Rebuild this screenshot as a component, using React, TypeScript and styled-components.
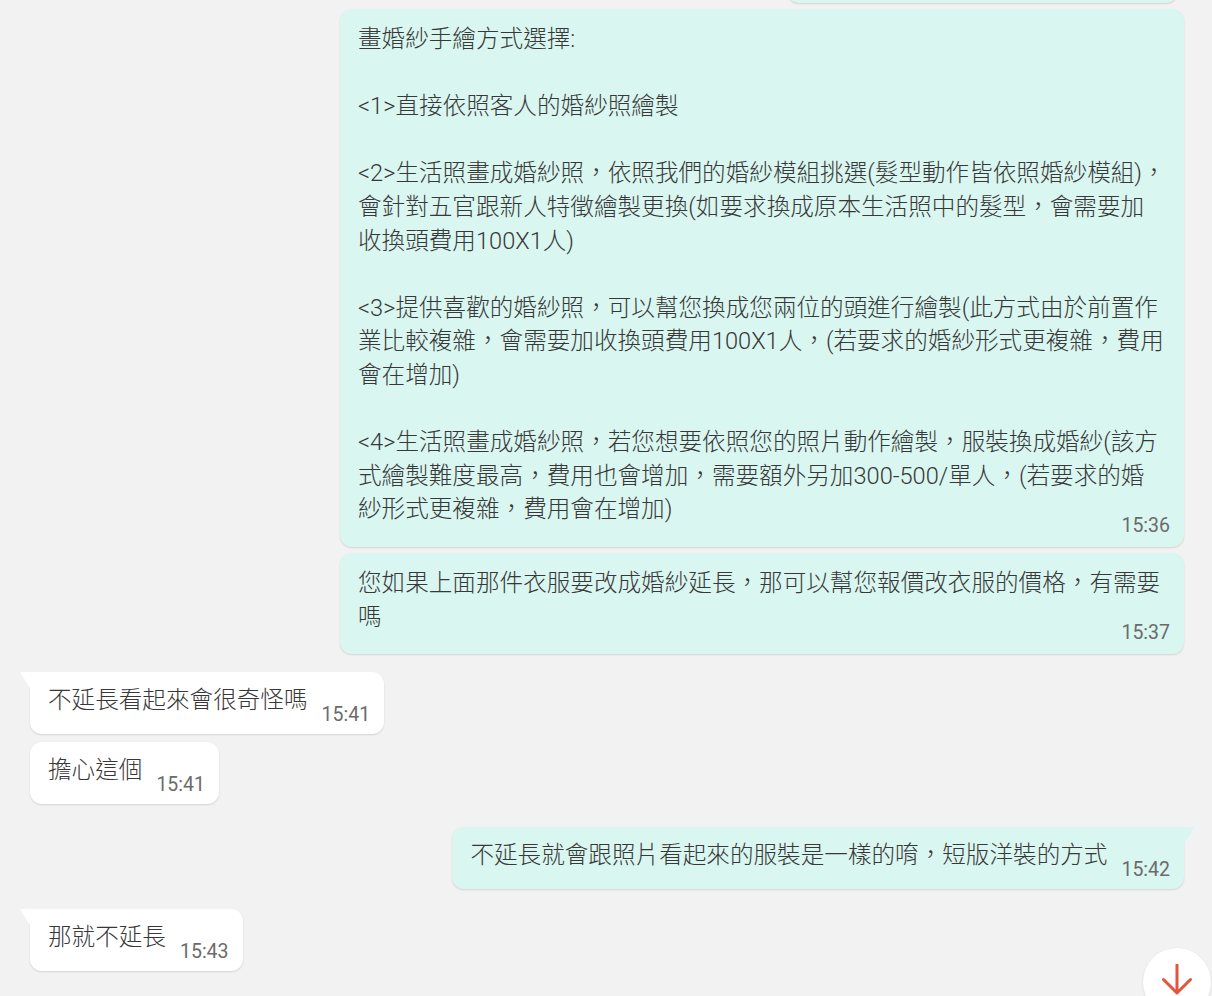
import React from "react";
import styled, { createGlobalStyle, css } from "styled-components";

const GlobalStyle = createGlobalStyle`
  html, body {
    margin: 0;
    padding: 0;
    background: #f2f2f2;
    overflow: hidden;
  }
  body {
    font-family: Roboto, "Noto Sans CJK TC", sans-serif;
  }
`;

const Chat = styled.div`
  display: flex;
  flex-direction: column;
  height: 996px;
  box-sizing: border-box;
  padding: 0 28px 0 30px;
`;

const Row = styled.div<{ $out?: boolean; $gap: number }>`
  display: flex;
  justify-content: ${(p) => (p.$out ? "flex-end" : "flex-start")};
  margin-top: ${(p) => p.$gap}px;
`;

const Bubble = styled.div<{ $out?: boolean; $tail?: boolean; $wide?: boolean }>`
  position: relative;
  box-sizing: border-box;
  background: ${(p) => (p.$out ? "#d9f6f0" : "#ffffff")};
  color: #383838;
  border-radius: 12px;
  box-shadow: 0 1px 2px rgba(0, 0, 0, 0.13);
  display: flex;
  ${(p) =>
    p.$wide
      ? css`
          flex-direction: column;
          width: 844px;
          padding: 14px 14px 10px 18px;
        `
      : css`
          align-items: flex-start;
          padding: 12px 14px 8px 18px;
        `}
  ${(p) =>
    p.$tail &&
    (p.$out
      ? css`
          border-top-right-radius: 0;
          &::before {
            content: "";
            position: absolute;
            top: 0;
            right: -11px;
            border-top: 16px solid #d9f6f0;
            border-right: 11px solid transparent;
          }
        `
      : css`
          border-top-left-radius: 0;
          &::before {
            content: "";
            position: absolute;
            top: 0;
            left: -10px;
            border-top: 16px solid #ffffff;
            border-left: 10px solid transparent;
          }
        `)}
`;

const PartialBubble = styled.div`
  width: 391px;
  height: 40px;
  margin-top: -37px;
  margin-right: 6px;
  background: #d9f6f0;
  border-radius: 12px;
  box-shadow: 0 1px 2px rgba(0, 0, 0, 0.13);
`;

const Text = styled.div`
  font-size: 23.6px;
  font-weight: 300;
  line-height: 33.6px;
  white-space: pre-line;
  color: #383838;
`;

const Time = styled.span<{ $wide?: boolean }>`
  font-family: Roboto, sans-serif;
  font-size: 19.5px;
  line-height: 22px;
  color: #6b6b6b;
  white-space: nowrap;
  ${(p) =>
    p.$wide
      ? css`
          align-self: flex-end;
          margin-top: -12px;
        `
      : css`
          margin-top: 20px;
          margin-left: 14px;
        `}
`;

const ScrollButton = styled.button`
  position: fixed;
  right: 1px;
  bottom: -20px;
  width: 68px;
  height: 68px;
  border: none;
  border-radius: 50%;
  background: #ffffff;
  box-shadow: 0 1px 3px rgba(0, 0, 0, 0.1);
  display: flex;
  align-items: flex-start;
  justify-content: center;
  padding: 16px 0 0 0;
  cursor: pointer;
`;

type Msg = {
  out?: boolean;
  tail?: boolean;
  wide?: boolean;
  gap: number;
  text: string;
  time: string;
};

const messages: Msg[] = [
  {
    out: true,
    wide: true,
    gap: 6,
    time: "15:36",
    text:
      "畫婚紗手繪方式選擇:\n\n<1>直接依照客人的婚紗照繪製\n\n<2>生活照畫成婚紗照，依照我們的婚紗模組挑選(髮型動作皆依照婚紗模組)，\n會針對五官跟新人特徵繪製更換(如要求換成原本生活照中的髮型，會需要加\n收換頭費用100X1人)\n\n<3>提供喜歡的婚紗照，可以幫您換成您兩位的頭進行繪製(此方式由於前置作\n業比較複雜，會需要加收換頭費用100X1人，(若要求的婚紗形式更複雜，費用\n會在增加)\n\n<4>生活照畫成婚紗照，若您想要依照您的照片動作繪製，服裝換成婚紗(該方\n式繪製難度最高，費用也會增加，需要額外另加300-500/單人，(若要求的婚\n紗形式更複雜，費用會在增加)",
  },
  {
    out: true,
    wide: true,
    gap: 6,
    time: "15:37",
    text: "您如果上面那件衣服要改成婚紗延長，那可以幫您報價改衣服的價格，有需要\n嗎",
  },
  { tail: true, gap: 18, time: "15:41", text: "不延長看起來會很奇怪嗎" },
  { gap: 8, time: "15:41", text: "擔心這個" },
  {
    out: true,
    tail: true,
    gap: 23,
    time: "15:42",
    text: "不延長就會跟照片看起來的服裝是一樣的唷，短版洋裝的方式",
  },
  { tail: true, gap: 20, time: "15:43", text: "那就不延長" },
];

export default function App() {
  return (
    <>
      <GlobalStyle />
      <Chat>
        <Row $out $gap={0}>
          <PartialBubble />
        </Row>
        {messages.map((m, i) => (
          <Row key={i} $out={m.out} $gap={m.gap}>
            <Bubble $out={m.out} $tail={m.tail} $wide={m.wide}>
              <Text>{m.text}</Text>
              <Time $wide={m.wide}>{m.time}</Time>
            </Bubble>
          </Row>
        ))}
      </Chat>
      <ScrollButton aria-label="scroll down">
        <svg width="32" height="32" viewBox="0 0 32 32" fill="none">
          <path
            d="M16 1 V29 M2.5 15.5 L16 29 L29.5 15.5"
            stroke="#e2553f"
            strokeWidth="3"
            strokeLinecap="round"
            strokeLinejoin="round"
          />
        </svg>
      </ScrollButton>
    </>
  );
}
